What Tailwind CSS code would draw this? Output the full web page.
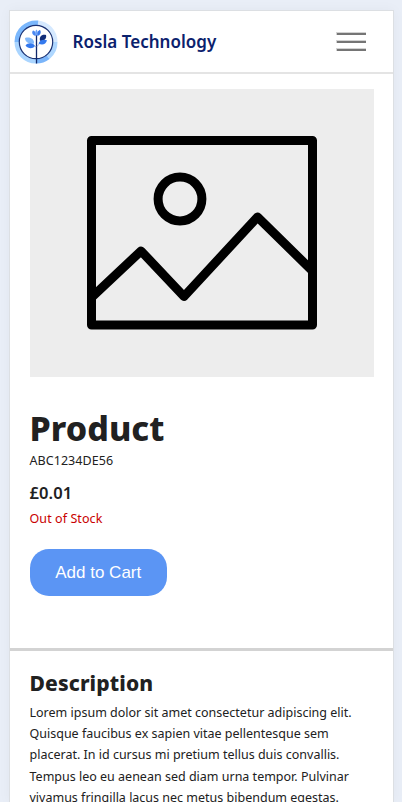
<!DOCTYPE html>
<html lang="en">
<head>
<meta charset="utf-8">
<title>Rosla Technology</title>
<script src="https://cdn.jsdelivr.net/npm/@tailwindcss/browser@4"></script>
</head>
<body class="h-[802px] overflow-hidden bg-[#e9eef7] px-[9px] pt-2.5 font-['Noto_Sans',sans-serif] text-[#212121]">
<div class="h-[792px] w-[385px] overflow-hidden border border-b-0 border-[#dcdfe3] bg-white shadow-[0_0_12px_rgba(0,0,0,0.04)]">
  <header class="flex h-[63px] items-center border-b-2 border-[#e4e4e4] pl-1 pr-[27px]">
    <svg class="size-11 shrink-0" viewBox="0 0 44 44" fill="none">
      <path d="M23.500 3A19 19 0 0 1 41 22" stroke="#d5e9ff" stroke-width="5"/>
      <path d="M41 22A19 19 0 0 1 34 37" stroke="#aed7ff" stroke-width="5"/>
      <path d="M34 37A19 19 0 0 1 22 41" stroke="#7ab5fa" stroke-width="5"/>
      <path d="M22 41A19 19 0 0 1 3 22" stroke="#aad5ff" stroke-width="5"/>
      <path d="M3 22A19 19 0 0 1 24 3" stroke="#7ab7fc" stroke-width="5"/>
      <circle cx="22" cy="22" r="16.700" fill="#fff" stroke="#1b3273" stroke-width="1.200"/>
      <path d="M22.500 15V43.500" stroke="#10286b" stroke-width="1.300"/>
      <path d="M22.500 27L27 22M22 27L18 24" stroke="#6c86bd" stroke-width=".6"/>
      <path d="M21.500 16C18 15 17.500 12 19 10.500C21.500 11 22.500 14 21.500 16Z" fill="#4b88f1"/>
      <path d="M22.300 16C20.700 13.500 21 11 22.500 9.500C24 11 24 14 22.300 16Z" fill="#6ca3f7"/>
      <path d="M23.500 16C22.500 13 24 10.500 26 10C27.500 12 26.500 15 23.500 16Z" fill="#3778ec"/>
      <path d="M20 23.500C14.500 24.500 11 21.500 11 18C16 16.500 20.500 19 20 23.500Z" fill="#83b9fa"/>
      <path d="M20.800 26C19 29 14 29 11.500 25.500C13.500 22.500 19.500 22.500 20.800 26Z" fill="#3479ee"/>
      <path d="M26 20.800C25 17 27.500 14 32 15C33 18.500 30 21.500 26 20.800Z" fill="#122d78"/>
      <path d="M24.500 23.500C25.500 20 29.500 18.800 33 20.300C32 24.500 28 25.500 24.500 23.500Z" fill="#3479ee"/>
    </svg>
    <div class="ml-[14.500px] whitespace-nowrap text-[17px] font-semibold leading-6 tracking-[0.03px] text-[#0b216d]">Rosla Technology</div>
    <svg class="ml-auto h-5 w-[30px] shrink-0" viewBox="0 0 30 20">
      <path d="M0 0H30V3H0ZM0 8H30V11H0ZM0 16H30V19H0Z" fill="#d2d2d2"/>
      <path d="M1 1H30V3H1ZM1 9H30V11H1ZM1 17H30V19H1Z" fill="#757575"/>
    </svg>
  </header>
  <main>
    <section class="flex h-[577px] flex-col border-b-3 border-[#d3d3d3] px-[19.500px] pt-[14.500px]">
      <svg class="h-[288px] w-[344.500px] shrink-0" viewBox="0 0 344.500 288" fill="none" stroke="#000" stroke-width="9" stroke-linejoin="round">
        <path d="M0 0H344.500V288H0Z" fill="#ededed" stroke="none"/>
        <path d="M61.500 51.500H282.500V236H61.500Z"/>
        <circle cx="150" cy="110" r="21.900"/>
        <path d="M61.500 208.500L111 162L154 207.500L227.500 128L282.500 182"/>
      </svg>
      <h1 class="mt-[27.500px] text-[34px] font-extrabold leading-[48px] tracking-[0.04px]">Product</h1>
      <p class="mt-px text-[12.500px] leading-4 tracking-[0.06px]">ABC1234DE56</p>
      <p class="mt-3 text-[16.500px] font-semibold leading-6 tracking-[0.1px]">£0.01</p>
      <p class="mt-[5px] text-[12.500px] leading-[18px] tracking-[0.08px] text-[#c90000]">Out of Stock</p>
      <button class="mt-[20.500px] h-[47.500px] w-[137.500px] rounded-[19px] bg-[#5b95f4] pt-px font-['Liberation_Sans',Arial,sans-serif] text-[17px] leading-none text-white">Add to Cart</button>
    </section>
    <section class="px-[19.500px] pt-[17px]">
      <h2 class="text-[21px] font-extrabold leading-[30px] tracking-[0.12px]">Description</h2>
      <p class="mt-[4px] whitespace-nowrap text-[12.500px] leading-[21.200px]">Lorem ipsum dolor sit amet consectetur adipiscing elit.<br>Quisque faucibus ex sapien vitae pellentesque sem<br>placerat. In id cursus mi pretium tellus duis convallis.<br>Tempus leo eu aenean sed diam urna tempor. Pulvinar<br>vivamus fringilla lacus nec metus bibendum egestas.</p>
    </section>
  </main>
</div>
</body>
</html>
